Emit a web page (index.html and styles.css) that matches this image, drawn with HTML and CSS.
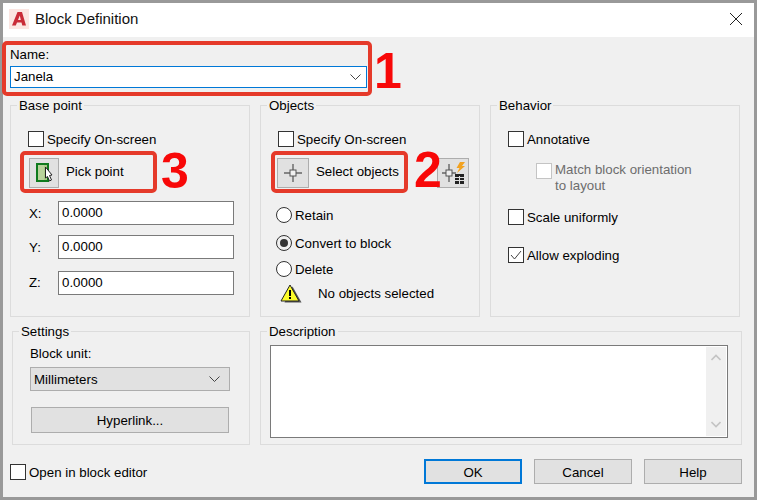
FILE: index.html
```html
<!DOCTYPE html>
<html lang="en">
<head>
<meta charset="utf-8">
<title>Block Definition</title>
<link rel="stylesheet" href="styles.css">
</head>
<body>
<div class="window">
  <header class="titlebar">
    <span class="app-logo">
      <svg width="20" height="20" viewBox="0 0 20 20"><rect width="20" height="20" fill="#fbe6e2"/><path d="M3 16.5 L8.5 3 H13 L17 16.5 H13.3 L12.5 13.5 H8 L6.8 16.5 Z M9 11 H11.8 L10.8 6.5 Z" fill="#c92c38" fill-rule="evenodd"/></svg>
    </span>
    <span class="title">Block Definition</span>
    <svg class="close" width="12" height="12" viewBox="0 0 12 12"><path d="M0 0 L12 12 M12 0 L0 12" stroke="#222" stroke-width="1" fill="none"/></svg>
  </header>

  <main class="content">
    <div class="name-label">Name:</div>
    <div class="name-combo">
      <span>Janela</span>
      <svg width="11" height="6" viewBox="0 0 11 6"><path d="M0.5 0.5 L5.5 5.5 L10.5 0.5" stroke="#444" fill="none"/></svg>
    </div>

    <div class="row-top">
      <fieldset class="panel panel-base">
        <legend>Base point</legend>
        <div class="panel-body">
          <label class="check"><span class="box"></span><span class="check-text">Specify On-screen</span></label>
          <div class="pick-row">
            <button class="icon-btn" type="button">
              <svg width="24" height="24" viewBox="0 0 24 24">
                <rect x="5" y="3" width="11" height="17" fill="#a9c987" stroke="#0f7a1d" stroke-width="2"/>
                <rect x="6" y="4" width="6" height="15" fill="#b8d39b"/>
                <path d="M13.5 6 L13.5 17 L15.5 15.5 L17.5 20 L19.5 19 L17.5 14.5 L20 14 Z" fill="#fff" stroke="#222" stroke-width="1"/>
              </svg>
            </button>
            <span class="btn-label">Pick point</span>
          </div>
          <div class="coord coord-x"><span class="coord-label">X:</span><span class="field">0.0000</span></div>
          <div class="coord coord-y"><span class="coord-label">Y:</span><span class="field">0.0000</span></div>
          <div class="coord coord-z"><span class="coord-label">Z:</span><span class="field">0.0000</span></div>
        </div>
      </fieldset>

      <fieldset class="panel panel-objects">
        <legend>Objects</legend>
        <div class="panel-body">
          <label class="check"><span class="box"></span><span class="check-text">Specify On-screen</span></label>
          <div class="select-row">
            <button class="icon-btn wide" type="button">
              <svg width="20" height="20" viewBox="0 0 20 20"><path d="M10 1 V7 M10 13 V19 M1 10 H7 M13 10 H19" stroke="#666" stroke-width="1.4"/><rect x="7" y="7" width="6" height="6" fill="#f0f0f0" stroke="#555"/></svg>
            </button>
            <span class="btn-label">Select objects</span>
            <button class="icon-btn wide quick" type="button">
              <svg width="26" height="26" viewBox="0 0 26 26">
                <path d="M9 4 V10 M9 16 V22 M2 13 H6 M12 13 H16" stroke="#666" stroke-width="1.4"/>
                <rect x="6" y="10" width="6" height="6" fill="#eee" stroke="#555"/>
                <path d="M20 2 H25 L22 6 H25 L17 13 L19.5 8 H16.5 Z" fill="#f2a21f"/>
                <rect x="15" y="14" width="9" height="10" fill="#222"/>
                <path d="M15 17.5 H24 M15 20.5 H24 M19.5 16 V24" stroke="#ddd" stroke-width="1"/>
              </svg>
            </button>
          </div>
          <label class="radio retain"><span class="dot"></span><span class="check-text">Retain</span></label>
          <label class="radio convert"><span class="dot on"></span><span class="check-text">Convert to block</span></label>
          <label class="radio delete"><span class="dot"></span><span class="check-text">Delete</span></label>
          <div class="warning">
            <svg width="22" height="20" viewBox="0 0 22 20">
              <path d="M11 1 L20 17 H3 Z" fill="#555" transform="translate(1.5 1.5)"/>
              <path d="M10 1 L19 17 H1 Z" fill="#fdfd2a" stroke="#222" stroke-width="1" stroke-linejoin="round"/>
              <rect x="9" y="6" width="2" height="6" fill="#000"/><rect x="9" y="13" width="2" height="2" fill="#000"/>
            </svg>
            <span>No objects selected</span>
          </div>
        </div>
      </fieldset>

      <fieldset class="panel panel-behavior">
        <legend>Behavior</legend>
        <div class="panel-body">
          <label class="check"><span class="box"></span><span class="check-text">Annotative</span></label>
          <label class="check match"><span class="box off"></span><span class="match-text">Match block orientation<br>to layout</span></label>
          <label class="check scale"><span class="box"></span><span class="check-text">Scale uniformly</span></label>
          <label class="check allow"><span class="box"><svg width="14" height="14" viewBox="0 0 14 14"><path d="M2 7 L5.5 11 L12 3" stroke="#444" fill="none"/></svg></span><span class="check-text">Allow exploding</span></label>
        </div>
      </fieldset>
    </div>

    <div class="row-bottom">
      <fieldset class="panel panel-settings">
        <legend>Settings</legend>
        <div class="panel-body">
          <div class="unit-label">Block unit:</div>
          <div class="unit-select">
            <span class="check-text">Millimeters</span>
            <svg width="11" height="6" viewBox="0 0 11 6"><path d="M0.5 0.5 L5.5 5.5 L10.5 0.5" stroke="#444" fill="none"/></svg>
          </div>
          <button class="btn hyperlink" type="button">Hyperlink...</button>
        </div>
      </fieldset>
      <fieldset class="panel panel-description">
        <legend>Description</legend>
        <div class="panel-body">
          <div class="memo">
            <div class="scrollbar">
              <svg width="10" height="7" viewBox="0 0 10 7"><path d="M0.5 6 L5 1.5 L9.5 6" stroke="#c4c4c4" stroke-width="1.6" fill="none"/></svg>
              <svg width="10" height="7" viewBox="0 0 10 7"><path d="M0.5 1 L5 5.5 L9.5 1" stroke="#c4c4c4" stroke-width="1.6" fill="none"/></svg>
            </div>
          </div>
        </div>
      </fieldset>
    </div>

    <footer class="footer">
      <label class="check"><span class="box"></span><span class="check-text">Open in block editor</span></label>
      <div class="actions">
        <button class="btn default" type="button">OK</button>
        <button class="btn" type="button">Cancel</button>
        <button class="btn" type="button">Help</button>
      </div>
    </footer>
  </main>

  <div class="callout callout-name"></div>
  <div class="callout callout-pick"></div>
  <div class="callout callout-select"></div>
  <span class="num num-1">1</span>
  <span class="num num-2">2</span>
  <span class="num num-3">3</span>
</div>
</body>
</html>
```

FILE: styles.css
```css
* { box-sizing: border-box; }
html, body { margin: 0; padding: 0; }
body {
  width: 757px;
  height: 500px;
  overflow: hidden;
  font-family: "Liberation Sans", sans-serif;
  font-size: 13.3px;
  line-height: 16px;
  color: #000;
}
.window {
  position: relative;
  width: 757px;
  height: 500px;
  border: 3px solid #999;
  display: flex;
  flex-direction: column;
  background: #f0f0f0;
}
.titlebar {
  height: 34px;
  flex: none;
  background: #fff;
  display: flex;
  align-items: center;
  padding: 0 12px 0 6px;
}
.app-logo { display: block; width: 20px; height: 20px; margin-right: 6px; margin-top: -3px; }
.app-logo svg { display: block; }
.title { font-size: 15px; color: #111; margin-top: -3px; }
.close { margin-left: auto; margin-top: -3px; }

.content { flex: 1; padding: 9px 7px 0 7px; }
.name-label { height: 16px; padding: 1px 0 0 0; line-height: 15px; margin-left: 0; }
.name-combo {
  width: 357px;
  height: 22px;
  margin-top: 4px;
  background: #fff;
  border: 1px solid #0078d7;
  display: flex;
  align-items: center;
  justify-content: space-between;
  padding: 0 5px 0 3px;
}

.panel {
  margin: 0;
  padding: 0;
  min-width: 0;
  border: 1px solid #dcdcdc;
  flex: none;
}
.panel legend {
  margin-left: 6px;
  padding: 2px 2px 0;
  line-height: 14px;
}
.row-top { display: flex; margin-top: 9px; height: 220px; }
.panel-base { width: 240px; height: 220px; }
.panel-objects { width: 220px; height: 220px; margin-left: 10px; }
.panel-behavior { width: 250px; height: 220px; margin-left: 10px; }

.row-bottom { display: flex; margin-top: 6px; height: 122px; }
.panel-settings { width: 238px; height: 122px; margin-left: 2px; }
.panel-description { width: 482px; height: 122px; margin-left: 10px; }

.panel-body { padding: 18px 0 0 17px; }

.check { display: flex; align-items: flex-start; gap: 3px; height: 16px; }
.check-text { display: block; padding-top: 1px; white-space: nowrap; }
.match-text { display: block; margin-top: -1px; }
.box {
  flex: none;
  width: 16px;
  height: 16px;
  background: #fff;
  border: 1px solid #333;
  display: block;
}
.box svg { display: block; }
.box.off { border-color: #c4c4c4; }

.icon-btn {
  flex: none;
  width: 30px;
  height: 30px;
  padding: 0;
  background: #e1e1e1;
  border: 1px solid #adadad;
  display: flex;
  align-items: center;
  justify-content: center;
}
.icon-btn.wide { width: 32px; }
.btn-label { white-space: nowrap; padding-bottom: 2px; }

.pick-row { display: flex; align-items: center; margin: 11px 0 0 1px; gap: 7px; }
.coord { display: flex; align-items: center; height: 24px; padding-left: 1px; }
.coord-x { margin-top: 13px; }
.coord-y { margin-top: 10px; }
.coord-z { margin-top: 12px; }
.coord-label { width: 29px; padding-top: 2px; }
.coord-z .coord-label { padding-top: 0; }
.field {
  width: 176px;
  height: 24px;
  background: #fff;
  border: 1px solid #7a7a7a;
  padding: 3px 3px 0;
}

.select-row { display: flex; align-items: center; margin: 11px 0 0 -1px; gap: 7px; width: 192px; }
.quick { margin-left: auto; }

.radio { display: flex; align-items: flex-start; gap: 3px; height: 16px; margin-left: -2px; }
.dot {
  flex: none;
  width: 16px;
  height: 16px;
  border-radius: 50%;
  border: 1px solid #333;
  background: #fff;
  display: block;
  position: relative;
}
.dot.on { background: #f0f0f0; }
.dot.on::after {
  content: "";
  position: absolute;
  left: 3px; top: 3px;
  width: 8px; height: 8px;
  border-radius: 50%;
  background: #333;
}
.retain { margin-top: 19px; }
.convert { margin-top: 12px; }
.delete { margin-top: 10px; }
.warning { display: flex; align-items: center; margin: 7px 0 0 2px; }
.warning span { margin-left: 16px; }
.warning svg { flex: none; display: block; }

.match { margin: 16px 0 0 28px; color: #6d6d6d; }
.scale { margin-top: 30px; }
.allow { margin-top: 22px; }

.panel-settings .panel-body { padding: 0 0 0 17px; }
.unit-label { height: 16px; margin-top: 6px; padding-top: 1px; line-height: 15px; }
.unit-select {
  width: 200px;
  height: 24px;
  margin-top: 6px;
  background: #e1e1e1;
  border: 1px solid #adadad;
  display: flex;
  align-items: center;
  justify-content: space-between;
  padding: 0 9px 0 3px;
}
.btn {
  font: inherit;
  color: #000;
  width: 98px;
  height: 25px;
  padding: 2px 0 0;
  background: #e1e1e1;
  border: 1px solid #adadad;
}
.hyperlink { display: block; width: 198px; height: 26px; margin: 16px 0 0 1px; }

.panel-description .panel-body { padding: 6px 0 0 9px; }
.memo {
  width: 458px;
  height: 93px;
  background: #fff;
  border: 1px solid #7a7a7a;
  display: flex;
  justify-content: flex-end;
  padding: 1px;
}
.scrollbar {
  width: 20px;
  background: #f0f0f0;
  display: flex;
  flex-direction: column;
  align-items: center;
  justify-content: space-between;
  padding: 7px 0 8px;
}

.footer { display: flex; justify-content: space-between; align-items: center; margin-top: 14px; height: 25px; width: 732px; }
.actions { display: flex; gap: 12px; }
.btn.default { border: 2px solid #0078d7; }

.callout {
  position: absolute;
  border: 4px solid #e53a2a;
  border-radius: 5px;
}
.callout-name { left: -1px; top: 38px; width: 370px; height: 55px; }
.callout-pick { left: 17px; top: 148px; width: 137px; height: 42px; }
.callout-select { left: 268px; top: 148px; width: 137px; height: 42px; }

.num {
  position: absolute;
  font-family: "Liberation Sans", sans-serif;
  font-weight: 700;
  font-size: 50px;
  line-height: 50px;
  color: #f80808;
}
.num-1 { left: 371px; top: 43px; }
.num-2 { left: 411px; top: 142px; }
.num-3 { left: 158px; top: 143px; }
```
